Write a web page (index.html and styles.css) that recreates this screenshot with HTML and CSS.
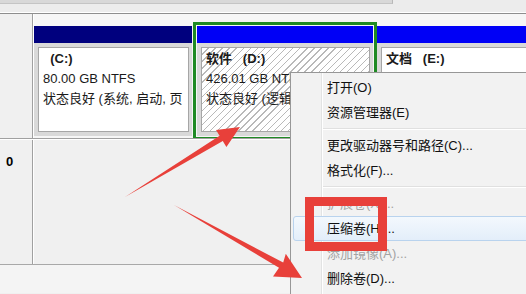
FILE: index.html
```html
<!DOCTYPE html>
<html lang="zh-CN">
<head>
<meta charset="utf-8">
<title>磁盘管理</title>
<link rel="stylesheet" href="styles.css">
</head>
<body>
<div class="screen">
  <div class="topstrip"><div class="tab"></div></div>

  <div class="disk row1">
    <div class="dlabel"></div>
    <div class="parts">
      <div class="part p-c">
        <div class="phead navy"></div>
        <div class="pbody">
          <div class="pbox">
            <div class="pname">  (C:)</div>
            <div class="pline">80.00 GB NTFS</div>
            <div class="pline">状态良好 (系统, 启动, 页</div>
          </div>
        </div>
      </div>
      <div class="part p-d selected">
        <div class="phead blue"></div>
        <div class="pbody">
          <div class="pbox hatch">
            <div class="pname">软件   (D:)</div>
            <div class="pline">426.01 GB NTFS</div>
            <div class="pline">状态良好 (逻辑驱动器)</div>
          </div>
        </div>
      </div>
      <div class="part p-e">
        <div class="phead blue"></div>
        <div class="pbody">
          <div class="pbox">
            <div class="pname">文档   (E:)</div>
          </div>
        </div>
      </div>
    </div>
  </div>

  <div class="disk row2">
    <div class="dlabel"><b>0</b></div>
    <div class="parts empty"></div>
  </div>

  <div class="bottom"></div>

  <div class="menu">
    <div class="gutter"></div>
    <div class="mi">打开(O)</div>
    <div class="mi">资源管理器(E)</div>
    <div class="sep"></div>
    <div class="mi">更改驱动器号和路径(C)...</div>
    <div class="mi">格式化(F)...</div>
    <div class="sep"></div>
    <div class="mi dis">扩展卷(X)...</div>
    <div class="mi hot">压缩卷(H)...</div>
    <div class="mi dis">添加镜像(A)...</div>
    <div class="mi">删除卷(D)...</div>
  </div>

  <div class="redbox"></div>

  <svg class="annot" width="526" height="294" viewBox="0 0 526 294">
    <polygon fill="#e8403a" points="125,197 219.6,135.8 216,129.9 240,127 226.4,146.9 222.8,141"/>
    <polygon fill="#e8403a" points="174,205 283.2,262.6 285.8,253.8 302,278 273,276.4 279,267.8"/>
  </svg>
</div>
</body>
</html>
```

FILE: styles.css
```css
* { box-sizing: border-box; }
html, body { margin: 0; padding: 0; }
body {
  width: 526px;
  height: 294px;
  overflow: hidden;
  background: #f0f0f0;
  font-family: "Liberation Sans", "Noto Sans CJK SC", sans-serif;
  font-size: 13px;
  color: #000;
}
.screen {
  position: relative;
  width: 526px;
  height: 294px;
  overflow: hidden;
  background: #f0f0f0;
}
.topstrip {
  height: 14px;
  background: #ececec;
  border-bottom: 1px solid #8e8e8e;
  box-shadow: inset 0 -1px 0 #ffffff;
}
.tab {
  width: 393px;
  height: 4px;
  background: #d8d8d8;
  border-bottom: 1px solid #c4c4c4;
  border-right: 1px solid #b8b8b8;
}
.disk {
  display: flex;
}
.row1 { height: 125px; border-bottom: 1px solid #a0a0a0; }
.row2 { height: 126px; border-top: 1px solid #ffffff; border-bottom: 1px solid #a8a8a8; }
.dlabel {
  width: 33px;
  flex: none;
  background: #f0f0f0;
  border-right: 1px solid #a0a0a0;
  padding: 14px 0 0 6px;
  font-size: 13px;
  line-height: 16px;
}
.parts {
  flex: 1;
  display: flex;
  align-items: flex-start;
  padding-top: 12px;
  background: #f6f6f6;
  border-left: 1px solid #ffffff;
  overflow: hidden;
}
.parts.empty { background: #f0f0f0; }
.part { flex: none; }
.p-c { width: 158px; }
.p-d { width: 176px; margin-left: 5px; }
.p-e { width: 200px; margin-left: 4px; }
.selected {
  outline: 3px solid #1f8a24;
  outline-offset: 1px;
}
.phead { height: 17px; }
.navy { background: #00007e; }
.blue { background: #0000f6; }
.pbody {
  height: 93px;
  padding: 4px 3px 4px 4px;
  background: #d9d9d9;
}
.pbox {
  height: 85px;
  background: #ffffff;
  border: 1px solid #a6a6a6;
  padding: 1px 0 0 4px;
  overflow: hidden;
  white-space: nowrap;
  line-height: 20px;
  color: #1a1a1a;
}
.pbox.hatch {
  background: #ffffff repeating-linear-gradient(135deg, #ffffff 0, #ffffff 4px, #b9b9b9 4px, #b9b9b9 5px);
}
.pname { font-weight: bold; white-space: pre; }
.bottom { height: 28px; background: #f4f4f4; }

.menu {
  position: absolute;
  left: 290px;
  top: 72px;
  width: 250px;
  height: 230px;
  background: #f2f2f2;
  border: 1px solid #979797;
  padding: 2px;
  font-family: "Liberation Sans", "Noto Sans CJK SC", sans-serif;
  font-size: 13px;
}
.gutter {
  position: absolute;
  left: 30px;
  top: 0;
  bottom: 0;
  width: 2px;
  border-left: 1px solid #e2e3e3;
  border-right: 1px solid #ffffff;
}
.mi {
  position: relative;
  height: 25px;
  line-height: 23px;
  padding-left: 33px;
  border: 1px solid transparent;
  color: #101010;
  white-space: nowrap;
}
.mi.dis { color: #a3a3a3; }
.mi.hot {
  background: linear-gradient(#f3f8fd, #e3eefa);
  border-color: #b9d3ee;
  border-radius: 3px;
}
.sep {
  position: relative;
  height: 8px;
  margin-left: 30px;
  padding-top: 3px;
}
.sep::before {
  content: "";
  display: block;
  border-top: 1px solid #e0e0e0;
  border-bottom: 1px solid #ffffff;
}
.redbox {
  position: absolute;
  left: 305px;
  top: 197px;
  width: 82px;
  height: 54px;
  border: 9px solid #e8403a;
}
.annot {
  position: absolute;
  left: 0;
  top: 0;
  pointer-events: none;
}
```
